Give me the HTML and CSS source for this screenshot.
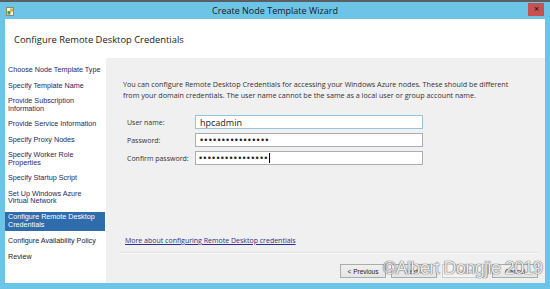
FILE: index.html
```html
<!DOCTYPE html>
<html lang="en">
<head>
    <meta charset="UTF-8">
    <title>Create Node Template Wizard</title>
    <link rel="stylesheet" href="styles.css">
</head>
<body>
    <div class="window">
        <div class="topstrip"></div>
        <div class="titlebar">
            <svg class="app-icon" width="8" height="9" viewBox="0 0 8 9">
                <rect x="0.5" y="0.5" width="7" height="8" fill="#f4f4e8" stroke="#8a8a70"/>
                <rect x="1.5" y="4" width="3" height="3.5" fill="#4c9a3c"/>
                <rect x="4" y="1.5" width="3" height="3" fill="#d8b03a"/>
            </svg>
            <span class="title">Create Node Template Wizard</span>
            <button class="close" type="button">&#x2715;</button>
        </div>
        <div class="frame">
            <div class="header">Configure Remote Desktop Credentials</div>
            <div class="main">
                <ul class="steps">
                    <li class="done">Choose Node Template Type</li>
                    <li class="done">Specify Template Name</li>
                    <li class="done">Provide Subscription Information</li>
                    <li class="done">Provide Service Information</li>
                    <li class="done">Specify Proxy Nodes</li>
                    <li class="done">Specify Worker Role Properties</li>
                    <li class="done">Specify Startup Script</li>
                    <li class="done">Set Up Windows Azure Virtual Network</li>
                    <li class="current">Configure Remote Desktop Credentials</li>
                    <li>Configure Availability Policy</li>
                    <li>Review</li>
                </ul>
                <div class="content">
                    <p class="intro">You can configure Remote Desktop Credentials for accessing your Windows Azure nodes. These should be different from your domain credentials. The user name cannot be the same as a local user or group account name.</p>
                    <form class="creds">
                        <label for="user">User name:</label>
                        <input type="text" id="user" class="field focused" value="hpcadmin">
                        <label for="pass">Password:</label>
                        <input type="password" id="pass" class="field" value="passwordpassword">
                        <label for="pass2">Confirm password:</label>
                        <div class="field fake"><span class="dots">&#8226;&#8226;&#8226;&#8226;&#8226;&#8226;&#8226;&#8226;&#8226;&#8226;&#8226;&#8226;&#8226;&#8226;&#8226;&#8226;</span><span class="caret"></span></div>
                    </form>
                    <div class="spacer"></div>
                    <a class="more" href="#">More about configuring Remote Desktop credentials</a>
                    <div class="separator"></div>
                    <div class="buttons">
                        <button type="button" class="prev">&lt; Previous</button>
                        <button type="button" class="next">Next &gt;</button>
                        <button type="button" class="finish" disabled>Finish</button>
                        <button type="button" class="cancel">Cancel</button>
                    </div>
                </div>
            </div>
        </div>
        <div class="watermark">&copy;Albert Dongjie 2019</div>
    </div>
</body>
</html>
```

FILE: styles.css
```css
body {
    margin: 0;
    width: 550px;
    height: 289px;
    overflow: hidden;
    font-family: "Open Sans", "Noto Sans", sans-serif;
}
.window {
    position: relative;
    width: 550px;
    height: 289px;
    background-color: #6cc4e6;
    display: flex;
    flex-direction: column;
}
.topstrip {
    height: 2px;
    background-color: #5a5f63;
}
.titlebar {
    height: 17px;
    display: flex;
    align-items: center;
    position: relative;
}
.app-icon {
    margin-left: 6px;
    margin-top: 1px;
}
.title {
    position: absolute;
    left: 0;
    right: 0;
    text-align: center;
    font-size: 9px;
    color: #1b1b1b;
    pointer-events: none;
}
.close {
    margin-left: auto;
    margin-right: 6px;
    width: 16px;
    height: 13px;
    margin-top: -3px;
    padding: 0;
    border: none;
    background-color: #c75050;
    color: #1c1c1c;
    font-size: 6px;
    font-weight: bold;
    line-height: 13px;
}
.frame {
    flex: 1;
    margin: 0 5px 6px 5px;
    background-color: #fff;
    display: flex;
    flex-direction: column;
}
.header {
    height: 39px;
    box-sizing: border-box;
    padding: 15px 0 0 9px;
    font-size: 9.4px;
    line-height: 12px;
    color: #222;
}
.main {
    flex: 1;
    display: flex;
}
.steps {
    list-style: none;
    margin: 0;
    padding: 4px 0 0 0;
    width: 101px;
    font-family: "Liberation Sans", Arial, sans-serif;
    font-size: 7.2px;
    line-height: 7.5px;
    color: #222;
}
.steps li {
    padding: 4px 4px 4px 3px;
}
.steps li.done {
    color: #27275e;
}
.steps li.current {
    margin: 3px 1px 2px 0;
    padding: 1.5px 4px 2px 3px;
    line-height: 8px;
    background-color: #2f6cab;
    color: #fff;
}
.content {
    flex: 1;
    background-color: #f0f0f0;
    display: flex;
    flex-direction: column;
    padding: 21px 7px 5px 17px;
}
.intro {
    margin: 0;
    font-size: 7.2px;
    line-height: 11px;
    color: #333;
    max-width: 396px;
}
.creds {
    margin: 14px 0 0 4px;
    display: grid;
    grid-template-columns: 68px 228px;
    row-gap: 4px;
    align-items: center;
}
.creds label {
    font-size: 7px;
    color: #333;
}
.field {
    box-sizing: border-box;
    height: 14px;
    margin: 0;
    padding: 0 0 0 4px;
    border: 1px solid #abadb3;
    background-color: #fff;
    font-family: "Open Sans", sans-serif;
    font-size: 9px;
    color: #222;
    outline: none;
}
.field.focused {
    border-color: #95c4dc;
}
input[type="password"], .dots {
    font-family: "Liberation Sans", Arial, sans-serif;
    font-size: 9px;
    letter-spacing: 1.2px;
}
.fake {
    display: flex;
    align-items: center;
    padding-left: 3px;
}
.caret {
    width: 1px;
    height: 10px;
    background-color: #000;
}
.spacer {
    flex: 1;
}
.more {
    margin-left: 2px;
    font-size: 7px;
    line-height: 10px;
    color: #2e2e8a;
}
.separator {
    margin: 6px 0 10px -3px;
    height: 0;
    border-top: 1px solid #dde2e6;
    border-bottom: 1px solid #fbfbfb;
}
.buttons {
    display: flex;
    justify-content: flex-end;
    gap: 5px;
}
.buttons button {
    width: 46px;
    height: 14px;
    padding: 0;
    border: 1px solid #acacac;
    background: linear-gradient(#f0f0f0, #e5e5e5);
    font-family: "Liberation Sans", Arial, sans-serif;
    font-size: 6.5px;
    color: #222;
}
.buttons .finish {
    color: #a0a0a0;
    border-color: #cdcdcd;
    background: #f4f4f4;
}
.buttons .cancel {
    margin-left: -1px;
}
.watermark {
    position: absolute;
    left: 383px;
    top: 258px;
    font-family: "Liberation Sans", Arial, sans-serif;
    font-size: 18px;
    letter-spacing: -0.6px;
    color: #ececec;
    text-shadow: 0 0 1px #555, 0 0 1px #555;
    white-space: nowrap;
}
```
